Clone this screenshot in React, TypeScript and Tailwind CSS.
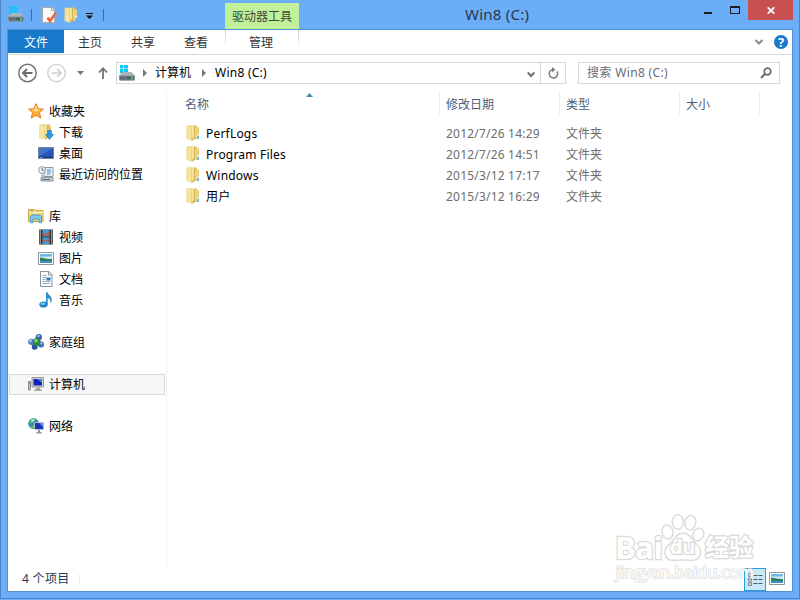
import React, { type ReactNode } from 'react';
import clsx from 'clsx';

type IconProps = { className?: string };

const Svg = ({ className, children }: { className?: string; children: ReactNode }) => (
  <svg width="16" height="16" viewBox="0 0 16 16" fill="none" className={clsx('shrink-0', className)}>
    {children}
  </svg>
);

const DriveIcon = ({ className }: IconProps) => (
  <Svg className={className}>
    <path d="M1 0h3.500v3.500H1zM5 0h4v3.500H5zM1 4h3.500v4H1zM5 4h4v4H5z" fill="#0fc8f9" />
    <path d="M2 8.500 4 7h8.500l1.500 1.500 2 2.500H0z" fill="#aab4ba" />
    <path d="M0 10.500h16V15l-1 .7H1L0 15z" fill="#8a959c" />
    <path d="M1 11.500h14v3H1z" fill="#4f5a62" />
    <path d="M2 12.300h6v1.400H2z" fill="#6f7c84" />
    <path d="M12 12h2v2h-2z" fill="#3fe04f" />
  </Svg>
);

const FolderIcon = ({ className }: IconProps) => (
  <Svg className={className}>
    <defs>
      <linearGradient id="folder-cover" x1="0" y1="0" x2="1" y2="0">
        <stop offset="0" stopColor="#ecd680" />
        <stop offset=".6" stopColor="#f8ecac" />
        <stop offset="1" stopColor="#e6cd74" />
      </linearGradient>
    </defs>
    <path d="M2 .5h10v2h2V14H2z" fill="#e2c566" />
    <path d="M9 2.500h4.500v11H9z" fill="#ecd37c" />
    <path d="M5 1h5v12.500L7.500 16z" fill="#d3b24f" />
    <path d="M6 1h3v11l-2 2z" fill="#f3e39a" />
    <path d="M1.500 1 6 1.500 7 3v13L1.500 14z" fill="url(#folder-cover)" />
    <path d="M12.500 11H14v3h-1.500z" fill="#4fb6ee" />
    <path d="M12.500 9H14v2h-1.500z" fill="#e5f1f6" />
  </Svg>
);

const PropertiesIcon = () => (
  <Svg>
    <path d="M1.500.5h9.500l2.500 2.500v12.500h-12z" fill="#fafafa" stroke="#b2a99f" />
    <path d="M10.500.5v3h3" stroke="#b2a99f" />
    <path d="m6.500 10.500 2.500 3.500L14.700 6" stroke="#e5673f" strokeWidth="2.600" />
  </Svg>
);

const StarIcon = () => (
  <Svg>
    <path d="m8 .7 2.200 5 5.300.4-4 3.600 1.300 5.500L8 12.300l-4.800 2.900 1.300-5.500-4-3.600 5.300-.4z" fill="#fdab2c" stroke="#e8792b" strokeWidth=".9" />
    <path d="m8 2.500 1.400 4 3.700.3-5.100 2-5-2 3.500-.3z" fill="#ffdd85" />
  </Svg>
);

const DownloadIcon = () => (
  <Svg>
    <path d="M2 .5h10v2h1V14H2z" fill="#e2c566" />
    <path d="M5 1h5v12.500L7.500 16z" fill="#d3b24f" />
    <path d="M6 1h3v11l-2 2z" fill="#f3e39a" />
    <path d="M1 1 5.500 1.500 6.500 3v13L1 14z" fill="#f4e59c" />
    <path d="M9.700 6.500h3.600v4h2.200L11.500 15.500l-4-5h2.200z" fill="#2c9be6" stroke="#1676bd" strokeWidth=".7" />
  </Svg>
);

const DesktopIcon = () => (
  <Svg>
    <path d="M.5 2.500h15v11H.5z" fill="#2858b4" stroke="#6d829d" />
    <path d="M1 3h14L1 11z" fill="#4574c8" />
    <path d="M1 11.500h14V13H1z" fill="#1c397f" />
    <path d="M2 12h3v.7H2z" fill="#77c4ee" />
  </Svg>
);

const RecentIcon = () => (
  <Svg>
    <path d="M6 1.500h9v9H6z" fill="#e7eef3" stroke="#8d9aa2" />
    <path d="M9 4h4M9 6h4M9 8h3" stroke="#4d91c1" />
    <path d="M3 11.500h12v3.500H3z" fill="#c7d0d5" stroke="#89949b" />
    <path d="M4 13.500h8" stroke="#5e6e77" />
    <circle cx="4" cy="4" r="3.400" fill="#f6f8f9" stroke="#89949b" />
    <path d="M4 2v2.300h1.800" stroke="#5b6871" />
    <path d="M4.500 8.500v5" stroke="#a7b1b7" strokeWidth="2" />
  </Svg>
);

const LibraryIcon = () => (
  <Svg>
    <path d="M.5 1.500h6l1 1H15v11H.5z" fill="#edd479" stroke="#c8a64a" />
    <path d="M1 4.500h14" stroke="#fff1b0" strokeWidth="1.500" />
    <path d="M3 3h2" stroke="#50a94e" />
    <path d="M2.500 8.500 4 7h8l1.500 1.500v6.200H11V11H5v3.700H2.500z" fill="#7cc6ec" stroke="#3f93c8" strokeWidth=".8" />
  </Svg>
);

const VideoIcon = () => (
  <Svg>
    <path d="M1.200.5h13.600v15H1.200z" fill="#303336" />
    <path d="M4.500 1h7v6.500h-7zM4.500 8.500h7V15h-7z" fill="#3fa0da" />
    <path d="m4.500 3 3 2 4-3v5.500l-3-1-4 1zM4.500 10l3 1.500 4-2V14l-3-2-4 1.500z" fill="#a8604c" />
    <path d="M2.500 1.500v13M13.500 1.500v13" stroke="#f4f4f4" strokeWidth="1" strokeDasharray="1 1" />
  </Svg>
);

const PictureIcon = ({ className }: IconProps) => (
  <Svg className={className}>
    <path d="M.5 2.500h15v12H.5z" fill="#fff" stroke="#8d969b" />
    <path d="M2 4h12v9H2z" fill="#d3edf8" />
    <path d="M2 4h12v2.500H2z" fill="#6db7e6" />
    <path d="M2 7.500c3 0 6 2 12 1.500v2H2z" fill="#2f7f58" />
    <path d="M2 11h12v2H2z" fill="#3a92c8" />
  </Svg>
);

const DocumentIcon = () => (
  <Svg>
    <path d="M2.500.5H11l3 3v12H2.500z" fill="#fbfcfd" stroke="#8a939b" />
    <path d="M10.500.5v3.500H14" stroke="#8a939b" />
    <path d="M4.500 4.500h4M4.500 6.500h4M4.500 8.500h3M4.500 10.500h7.500M4.500 12.500h7.500" stroke="#9ba9c9" />
    <path d="M8.500 6.500h4v3h-4z" fill="#2e77bd" />
  </Svg>
);

const MusicIcon = () => (
  <Svg>
    <path d="M8 .3h1.600c.5 2.700 4.400 4 4.200 7.700-.1 1.600-.8 2.700-1.800 3.400 1-3.200-.3-4.400-2.300-5.400v6.500H8z" fill="#2d8fd2" />
    <ellipse cx="5.500" cy="12.500" rx="4.200" ry="3.100" fill="#2386cc" />
    <ellipse cx="4.800" cy="11.700" rx="2.300" ry="1.300" fill="#74c4ef" />
  </Svg>
);

const HomegroupIcon = () => (
  <Svg>
    <circle cx="10.800" cy="3.300" r="3.200" fill="#3f68bf" />
    <circle cx="3.200" cy="7.800" r="3.100" fill="#4f7dcd" />
    <circle cx="13" cy="10.500" r="3" fill="#3f68bf" />
    <circle cx="6.700" cy="12.800" r="3" fill="#2b50ab" />
    <circle cx="8.700" cy="8" r="3.900" fill="#2a8c3f" />
    <circle cx="8" cy="6.800" r="1.700" fill="#8dd083" />
    <circle cx="2.500" cy="6.700" r="1.200" fill="#c3d8f5" />
    <circle cx="13.400" cy="9.500" r="1.100" fill="#b9d1f3" />
    <circle cx="10.500" cy="2" r="1.100" fill="#b9d1f3" />
  </Svg>
);

const ComputerIcon = () => (
  <Svg>
    <path d="M.5 5.500h2v8.500h-2z" fill="#b9c0c2" stroke="#868d90" />
    <path d="M1 7h1" stroke="#3cbb48" />
    <path d="M4 1.500h11.500v9.500H4z" fill="#d0d1d0" stroke="#989a9a" />
    <path d="M5.500 3H14v6.500H5.500z" fill="#0d22b6" />
    <path d="M9 3h5v4z" fill="#4b78e6" />
    <path d="M8 11.500h4v2H8zM6 13.500h8V15H6z" fill="#a3a5a5" />
  </Svg>
);

const NetworkIcon = () => (
  <Svg>
    <circle cx="5.500" cy="5.500" r="5.300" fill="#2b86bd" />
    <path d="M1 4c2-4 6-4 7-3.300L5.500 4 3 6zM2 8l4-1 1 3-2 1C3 10.500 2.500 9.500 2 8z" fill="#51bd58" />
    <path d="M3 2c2-1 3-1 4 0L4 4z" fill="#c7f0e3" />
    <path d="M6.500 4.500h9v7h-9z" fill="#1733b8" stroke="#b5bfce" />
    <path d="M11 5h4v4z" fill="#5f8eec" />
    <path d="M10 12h2v2h-2zM8.500 14h5v1.500h-5z" fill="#8b98a8" />
  </Svg>
);

const Crumb = ({ children }: { children: ReactNode }) => (
  <>
    <svg width="4" height="8" viewBox="0 0 4 8" className="shrink-0"><path d="M0 0v8l4-4z" fill="#767676" /></svg>
    <span className="whitespace-nowrap">{children}</span>
  </>
);

type NavItem = { label: string; icon: ReactNode; active?: boolean };

const navGroups: { head: NavItem; items?: NavItem[] }[] = [
  {
    head: { label: '收藏夹', icon: <StarIcon /> },
    items: [
      { label: '下载', icon: <DownloadIcon /> },
      { label: '桌面', icon: <DesktopIcon /> },
      { label: '最近访问的位置', icon: <RecentIcon /> },
    ],
  },
  {
    head: { label: '库', icon: <LibraryIcon /> },
    items: [
      { label: '视频', icon: <VideoIcon /> },
      { label: '图片', icon: <PictureIcon /> },
      { label: '文档', icon: <DocumentIcon /> },
      { label: '音乐', icon: <MusicIcon /> },
    ],
  },
  { head: { label: '家庭组', icon: <HomegroupIcon /> } },
  { head: { label: '计算机', icon: <ComputerIcon />, active: true } },
  { head: { label: '网络', icon: <NetworkIcon /> } },
];

const files = [
  { name: 'PerfLogs', date: '2012/7/26 14:29' },
  { name: 'Program Files', date: '2012/7/26 14:51' },
  { name: 'Windows', date: '2015/3/12 17:17' },
  { name: '用户', date: '2015/3/12 16:29' },
];

const NavRow = ({ item, nested }: { item: NavItem; nested?: boolean }) => (
  <div
    className={clsx(
      'ml-px flex h-[21px] w-[156px] items-center gap-[5px] whitespace-nowrap border',
      nested ? 'pl-7' : 'pl-[18px]',
      item.active ? 'border-[#dadada] bg-[#f7f7f7]' : 'border-transparent',
    )}
  >
    <span className="flex pb-px">{item.icon}</span>
    <span>{item.label}</span>
  </div>
);

const TitleBar = () => (
  <div className="flex h-[29px] shrink-0">
    <div className="flex h-[29px] w-[218px] items-center pl-px">
      <DriveIcon className="mb-px" />
      <div className="ml-[7px] h-3 w-px bg-[#426a9a]" />
      <div className="ml-[9px] flex gap-[6px]">
        <PropertiesIcon />
        <FolderIcon />
      </div>
      <svg width="7" height="6" viewBox="0 0 7 6" className="ml-[7px] mt-[3px]"><path d="M0 0h7v1H0zM0 2.500h7L3.500 6z" fill="#111" /></svg>
      <div className="ml-[10px] h-3 w-px bg-[#426a9a]" />
    </div>
    <div className="mt-[3px] flex w-[74px] items-center justify-center bg-[#c1f09b] pt-px text-[#3c4a35]">驱动器工具</div>
    <div className="flex-1 pl-[166px] pt-[4px] text-[15px] leading-[21px] tracking-[0.25px] text-[#26384d]">Win8 (C:)</div>
    <div className="flex h-5 w-[94px]">
      <div className="mt-[12px] ml-[5px] h-[2px] w-2 bg-[#1c1c1c]" />
      <div className="mt-[6px] ml-[18px] h-2 w-[10px] border border-t-2 border-[#1c1c1c]" />
      <div className="ml-2 flex h-5 w-[45px] items-center justify-center bg-[#c75050]">
        <svg width="8" height="7" viewBox="0 0 8 7"><path d="m.7.3 6.600 6.400M7.300.3.7 6.700" stroke="#fff" strokeWidth="1.700" /></svg>
      </div>
    </div>
  </div>
);

const RibbonTabs = () => (
  <div className="flex h-[25px] shrink-0 border-b border-[#dadbdc] text-[#333]">
    <div className="flex h-[23px] w-14 items-center justify-center bg-[#1979ca] pt-[2px] text-white">文件</div>
    <div className="flex h-6 w-[53px] items-center justify-center pr-px pt-px">主页</div>
    <div className="flex h-6 w-[53px] items-center justify-center pr-px pt-px">共享</div>
    <div className="flex h-6 w-[55px] items-center justify-center pr-[3px] pt-px">查看</div>
    <div className="h-[18px] w-px bg-linear-to-b from-[#c8c8c8] to-white" />
    <div className="flex h-6 w-[72px] items-center justify-center pr-[2px] pt-px">管理</div>
    <div className="h-[18px] w-px bg-linear-to-b from-[#c8c8c8] to-white" />
    <div className="flex h-6 flex-1 items-center justify-end gap-[11px] pr-[4px]">
      <svg width="8" height="6" viewBox="0 0 8 6" fill="none"><path d="m.5 1 3.500 3.500L7.500 1" stroke="#8a8a8a" strokeWidth="2" /></svg>
      <span className="flex size-[14px] items-center justify-center rounded-full bg-[#1979ca] font-['Noto_Sans'] text-[13px] font-bold leading-none text-white">?</span>
    </div>
  </div>
);

const AddressBar = () => (
  <div className="flex h-[37px] shrink-0 items-start pt-[7px] text-black">
    <svg width="92" height="22" viewBox="0 0 92 22" fill="none" className="shrink-0">
      <circle cx="19.500" cy="11" r="8.700" stroke="#767676" strokeWidth="1.500" />
      <path d="M24.500 11H15.500M19 7l-4 4 4 4" stroke="#6b6b6b" strokeWidth="2" />
      <circle cx="48.500" cy="11" r="8.700" stroke="#cecece" strokeWidth="1.300" />
      <path d="M43.500 11h9M49 7l4 4-4 4" stroke="#cecece" strokeWidth="1.700" />
      <path d="M69 9h7l-3.500 4z" fill="#767676" />
    </svg>
    <svg width="16" height="22" viewBox="0 0 16 22" fill="none" className="shrink-0 overflow-visible">
      <path d="M3 17V6.500M-1 10.500l4-4.300 4 4.300" stroke="#747474" strokeWidth="1.800" />
    </svg>
    <div className="flex h-[22px] w-[450px] border border-[#d9d9d9]">
      <div className="flex flex-1 items-center gap-[8px] pl-[2px]">
        <DriveIcon className="mb-px" />
        <Crumb><span className="mr-[3px]">计算机</span></Crumb>
        <Crumb><span className="ml-px tracking-[0.25px]">Win8 (C:)</span></Crumb>
      </div>
      <div className="flex w-[19px] items-center justify-center border-r border-[#d9d9d9] pt-[2px]">
        <svg width="8" height="7" viewBox="0 0 8 7" fill="none"><path d="m.7 1.500 3.300 3.500 3.300-3.500" stroke="#707070" strokeWidth="2" /></svg>
      </div>
      <div className="flex w-6 items-center justify-center">
        <svg width="12" height="12" viewBox="0 0 12 12" fill="none">
          <path d="M10 4.500A4.200 4.200 0 1 1 6.500 2.500" stroke="#808080" strokeWidth="1.600" />
          <path d="M5 0v5.300l3.500-2.500z" fill="#808080" />
        </svg>
      </div>
    </div>
    <div className="ml-3 flex h-[22px] w-[202px] items-center justify-between border border-[#d9d9d9] pl-2 pr-[7px] text-[#6d6d6d]">
      <span className="tracking-[0.35px]">搜索 Win8 (C:)</span>
      <svg width="12" height="12" viewBox="0 0 12 12" fill="none">
        <circle cx="7.500" cy="4.500" r="3.300" stroke="#6d6d6d" strokeWidth="1.700" />
        <path d="M5 7 1 11" stroke="#6d6d6d" strokeWidth="2" />
      </svg>
    </div>
  </div>
);

const Sidebar = () => (
  <div className="flex w-[159px] flex-col gap-[21px] border-r border-[#f2f2f2] pt-[9px] text-black">
    {navGroups.map(({ head, items }) => (
      <div key={head.label}>
        <NavRow item={head} />
        {items?.map((item) => <NavRow key={item.label} item={item} nested />)}
      </div>
    ))}
  </div>
);

const FileList = () => (
  <div className="flex-1">
    <div className="flex h-[31px] text-[#4c607a]">
      <div className="flex h-[22px] w-[273px] border-r border-[#e3edf5] pl-[18px]">
        <span className="w-[121px] leading-[25px]">名称</span>
        <svg width="7" height="4" viewBox="0 0 7 4" className="mt-px"><path d="M3.500 0 7 4H0z" fill="#3f8fb4" /></svg>
      </div>
      {['修改日期', '类型', '大小'].map((label, i) => (
        <div
          key={label}
          className={clsx('h-[22px] border-r border-[#e3edf5] pl-[6px] leading-[25px]', i === 2 ? 'w-20' : 'w-[120px]')}
        >
          {label}
        </div>
      ))}
    </div>
    {files.map((file) => (
      <div key={file.name} className="flex h-[21px] items-center text-[#6d6d6d]">
        <FolderIcon className="mb-px ml-[18px]" />
        <span className="ml-[5px] w-[240px] tracking-[0.2px] text-black">{file.name}</span>
        <span className="w-[120px] tracking-[0.2px]">{file.date}</span>
        <span>文件夹</span>
      </div>
    ))}
  </div>
);

const StatusBar = () => (
  <div className="flex h-[23px] shrink-0 items-center pl-[14px] text-[#1e395b]">
    <span className="pb-px tracking-[0.3px]">4 个项目</span>
    <div className="ml-[10px] h-[11px] w-px bg-[#ededed]" />
    <div className="ml-auto flex h-[23px] w-[22px] items-center justify-center border border-[#26a0da] bg-[#cbe8f6]">
      <svg width="15" height="13" viewBox="0 0 15 13" fill="none">
        <path d="M.5.500h3v3h-3zM.5 5h3v3h-3zM.5 9.500h3v3h-3z" fill="#fff" stroke="#7d8b95" />
        <path d="M1.500 1.500h1v1h-1zM1.500 10.500h1v1h-1z" fill="#356b9d" />
        <path d="M1.500 6h1v1h-1z" fill="#d33a2c" />
        <path d="M5.500 2.500h4M10.500 2.500h4M5.500 6.500h4M10.500 6.500h4M5.500 10.500h4M10.500 10.500h4" stroke="#4b5861" />
      </svg>
    </div>
    <PictureIcon className="mb-[3px] ml-[3px] mr-[7px]" />
  </div>
);

const Watermark = () => (
  <div className="pointer-events-none absolute left-[613px] top-[512px] h-[72px] w-[150px] select-none whitespace-nowrap text-white [-webkit-text-stroke:2.4px_#dadada] [paint-order:stroke_fill]">
    <svg width="150" height="72" viewBox="0 0 150 72" fill="none" stroke="#dedede" strokeWidth="1.600">
      <ellipse cx="54.500" cy="20" rx="5.500" ry="7" transform="rotate(-12 54.500 20)" />
      <ellipse cx="64.800" cy="10" rx="5.500" ry="7.300" />
      <ellipse cx="77.300" cy="10.700" rx="5.500" ry="7.300" transform="rotate(12 77.300 10.700)" />
      <ellipse cx="85.300" cy="22.500" rx="5.300" ry="6.500" transform="rotate(25 85.300 22.500)" />
      <path d="M70 21c7 0 9 7 13 11 5 4 6 9 3 13-3 5-9 3-16 3s-14 2-17-3c-2-5-1-10 4-13 4-4 6-11 13-11z" />
    </svg>
    <span className="absolute left-[2px] top-[20px] font-['Open_Sans'] text-[31px] font-bold leading-[30px] tracking-[-0.5px]">Bai</span>
    <span className="absolute left-[57px] top-[23px] font-['Open_Sans'] text-[20px] font-bold leading-[24px] tracking-[-0.5px]">du</span>
    <span className="absolute left-[92px] top-[22px] text-[24px] font-bold leading-[26px]">经验</span>
    <span className="absolute left-[3px] top-[54px] font-['Open_Sans'] text-[16px] font-normal leading-[12px] tracking-[0.1px] [-webkit-text-stroke:1.600px_#dedede]">jingyan.baidu.com</span>
  </div>
);

export default function App() {
  return (
    <div className="relative h-[600px] w-[800px] overflow-hidden bg-[#6badf6] font-['Noto_Sans','Noto_Sans_CJK_SC',sans-serif] text-[12px] leading-[18px]">
      <div className="flex h-[599px] flex-col border-x border-b border-[#4c84c4] px-[6px] pb-[6px]">
        <div className="flex min-h-0 flex-1 flex-col">
          <TitleBar />
          <div className="flex min-h-0 flex-1 flex-col border border-[#4f8ed3] bg-white">
            <RibbonTabs />
            <AddressBar />
            <div className="flex min-h-0 flex-1">
              <Sidebar />
              <FileList />
            </div>
            <StatusBar />
          </div>
        </div>
      </div>
      <Watermark />
    </div>
  );
}
